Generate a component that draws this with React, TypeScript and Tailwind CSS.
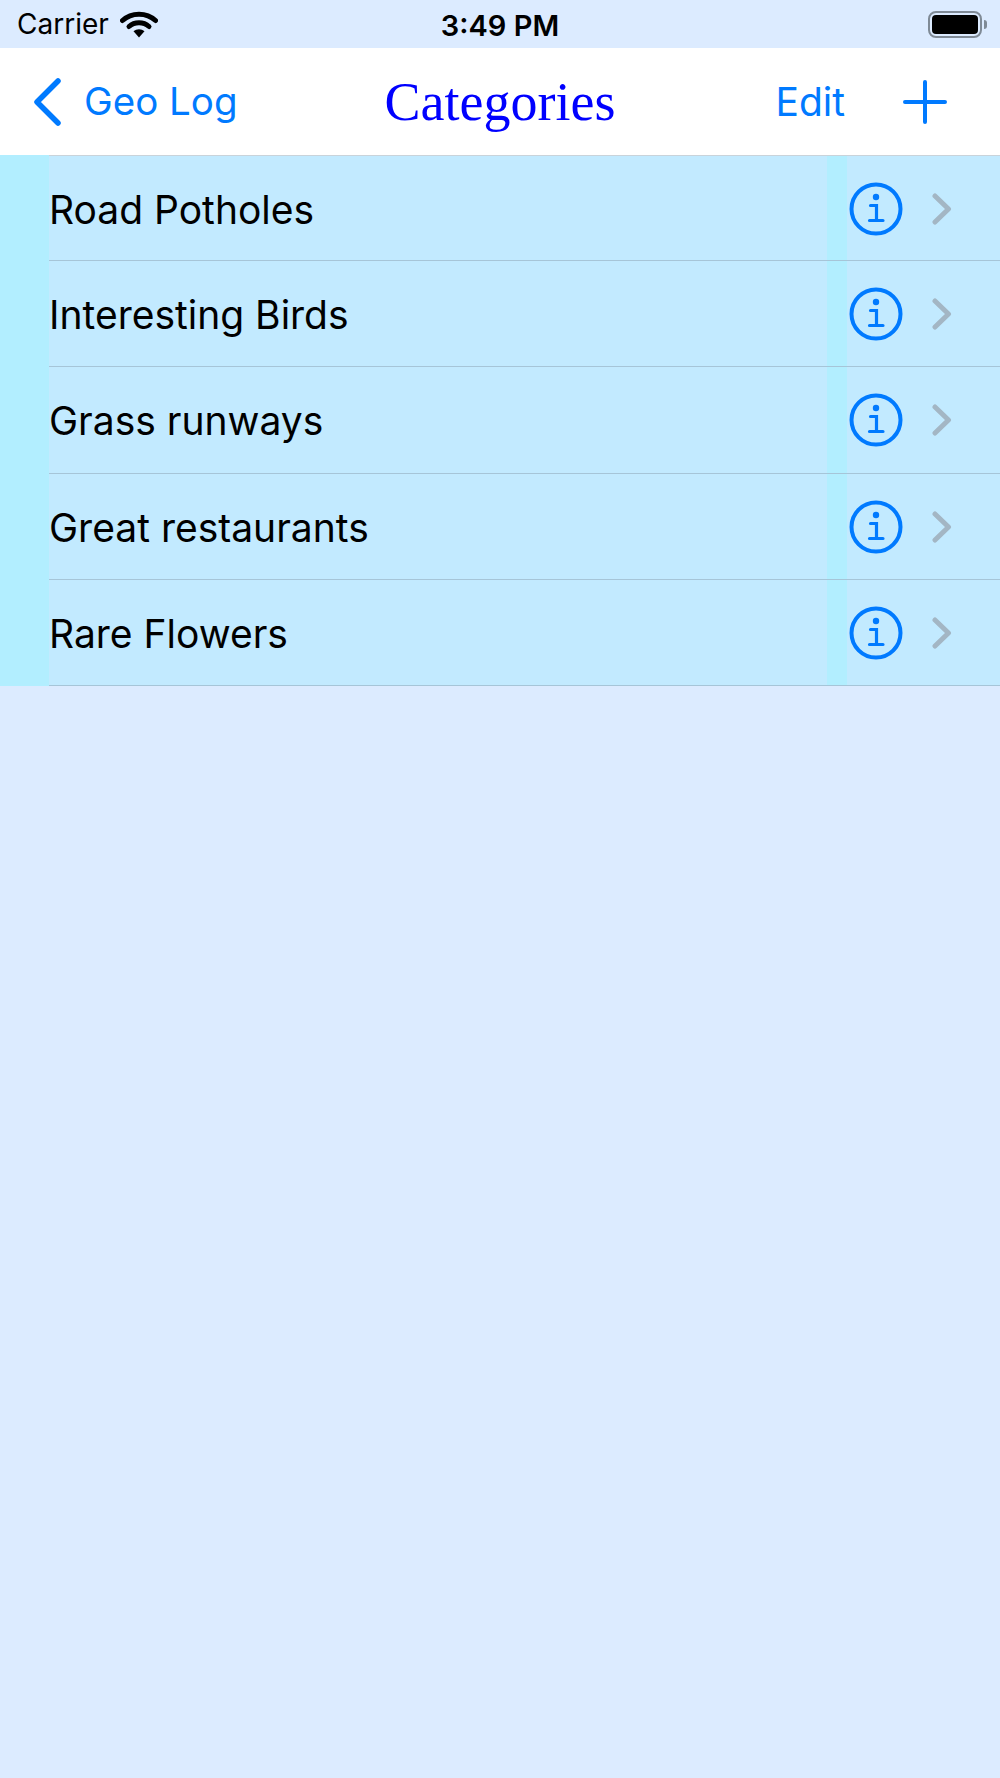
const categories = ["Road Potholes", "Interesting Birds", "Grass runways", "Great restaurants", "Rare Flowers"]

function Wifi() {
  return (
    <svg width="38" height="28" viewBox="0 0 38 28" fill="none" className="block">
      <path d="M2.500 10.500C11.500 2 26.500 2 35.500 10.500" stroke="#000" strokeWidth="5" strokeLinecap="round" />
      <path d="M9 16.500C14.500 11.500 23.500 11.500 29 16.500" stroke="#000" strokeWidth="5" strokeLinecap="round" />
      <path d="M13.500 21.200C16.500 18.500 21.500 18.500 24.500 21.200L19 27.500Z" fill="#000" />
    </svg>
  )
}

function Battery() {
  return (
    <div className="flex items-center gap-[2px]">
      <div className="h-[27px] w-[54px] rounded-[8px] border-[2px] border-[#7f8a96] p-[2px]">
        <div className="h-full w-full rounded-[4px] bg-black" />
      </div>
      <div className="h-[9px] w-[3px] rounded-r-[3px] bg-[#7f8a96]" />
    </div>
  )
}

function InfoIcon() {
  return (
    <svg width="54" height="54" viewBox="0 0 54 54" fill="none" className="block">
      <circle cx="27" cy="27" r="24.500" stroke="#007aff" strokeWidth="4" />
      <circle cx="27" cy="15" r="3.200" fill="#007aff" />
      <path d="M21.500 23.500H27.500V38M20.500 38.500H34" stroke="#007aff" strokeWidth="3.200" strokeLinecap="round" />
    </svg>
  )
}

function Disclosure() {
  return (
    <svg width="20" height="32" viewBox="0 0 20 32" fill="none" className="block">
      <path d="M3 3L16.500 16L3 29" stroke="#a3b6c4" strokeWidth="5" strokeLinecap="round" strokeLinejoin="round" />
    </svg>
  )
}

export default function App() {
  return (
    <div className="flex h-[1778px] w-[1000px] flex-col overflow-hidden bg-[#dcebff] font-['Inter',sans-serif] text-black">
      {/* Status bar */}
      <div className="grid h-[48px] grid-cols-3 items-center pl-[17px] pr-[13px]">
        <div className="flex items-center gap-[11px] text-[28px] leading-none">
          <span>Carrier</span>
          <Wifi />
        </div>
        <div className="pr-[4px] pt-[3px] text-center text-[29px] font-semibold leading-none">3:49 PM</div>
        <div className="flex justify-end">
          <Battery />
        </div>
      </div>

      {/* Nav bar */}
      <div className="grid h-[107px] grid-cols-[1fr_auto_1fr] items-center bg-white text-[#007aff]">
        <div className="flex items-center pl-[33px]">
          <svg width="28" height="48" viewBox="0 0 28 48" fill="none" className="block">
            <path d="M25 3L4 24L25 45" stroke="#007aff" strokeWidth="5.500" strokeLinecap="round" strokeLinejoin="round" />
          </svg>
          <span className="ml-[23px] text-[38.5px] leading-none">Geo Log</span>
        </div>
        <div className="font-['Liberation_Serif',serif] text-[54px] leading-none text-[#0000ff]">Categories</div>
        <div className="flex items-center justify-end gap-[58px] pr-[53px]">
          <span className="text-[39px] leading-none">Edit</span>
          <svg width="44" height="44" viewBox="0 0 44 44" fill="none" className="block">
            <path d="M22 2V42M2 22H42" stroke="#007aff" strokeWidth="4" strokeLinecap="round" />
          </svg>
        </div>
      </div>

      {/* Category rows */}
      <div className="flex flex-col">
        {categories.map((name, index) => (
          <div key={index} className="flex h-[106.2px] bg-[#c2eaff]">
            <div className="w-[49px] bg-[#b2eeff]" />
            <div className={index === 0 ? "flex flex-1 border-y-[1px] border-t-[#c9d3da] border-b-[#a6c5d8]" : "flex flex-1 border-b-[1px] border-[#a6c5d8]"}>
              <div className="flex-1 self-center pt-[2px] text-[39px] leading-none">{name}</div>
              <div className="w-[20px] bg-[#b2eeff]" />
              <div className="flex w-[153px] items-center pl-[2px] pt-[1px]">
                <InfoIcon />
                <div className="ml-[29px]">
                  <Disclosure />
                </div>
              </div>
            </div>
          </div>
        ))}
      </div>
    </div>
  )
}
